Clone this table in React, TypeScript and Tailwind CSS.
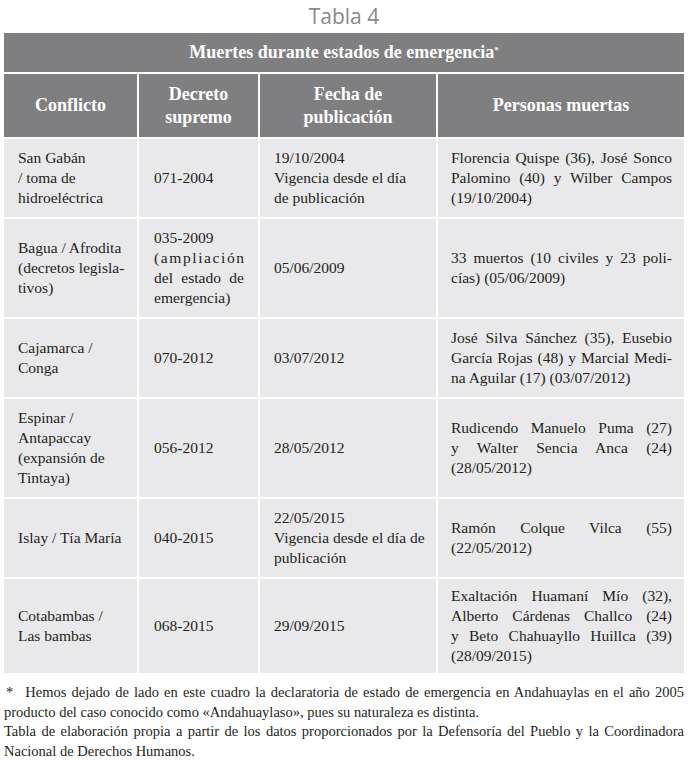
type Line = { t: string; j?: boolean; wide?: boolean };

const rows: { c: Line[][]; last?: boolean }[] = [
  {
    c: [
      [{ t: "San Gabán" }, { t: "/ toma de" }, { t: "hidroeléctrica" }],
      [{ t: "071-2004" }],
      [{ t: "19/10/2004" }, { t: "Vigencia desde el día" }, { t: "de publicación" }],
      [
        { t: "Florencia Quispe (36), José Sonco", j: true },
        { t: "Palomino (40) y Wilber Campos", j: true },
        { t: "(19/10/2004)" },
      ],
    ],
  },
  {
    c: [
      [{ t: "Bagua / Afrodita" }, { t: "(decretos legisla-" }, { t: "tivos)" }],
      [{ t: "035-2009" }, { t: "(ampliación", wide: true }, { t: "del estado de", j: true }, { t: "emergencia)" }],
      [{ t: "05/06/2009" }],
      [{ t: "33 muertos (10 civiles y 23 poli-", j: true }, { t: "cías) (05/06/2009)" }],
    ],
  },
  {
    c: [
      [{ t: "Cajamarca /" }, { t: "Conga" }],
      [{ t: "070-2012" }],
      [{ t: "03/07/2012" }],
      [
        { t: "José Silva Sánchez (35), Eusebio", j: true },
        { t: "García Rojas (48) y Marcial Medi-", j: true },
        { t: "na Aguilar (17) (03/07/2012)" },
      ],
    ],
  },
  {
    c: [
      [{ t: "Espinar /" }, { t: "Antapaccay" }, { t: "(expansión de" }, { t: "Tintaya)" }],
      [{ t: "056-2012" }],
      [{ t: "28/05/2012" }],
      [
        { t: "Rudicendo Manuelo Puma (27)", j: true },
        { t: "y Walter Sencia Anca (24)", j: true },
        { t: "(28/05/2012)" },
      ],
    ],
  },
  {
    c: [
      [{ t: "Islay / Tía María" }],
      [{ t: "040-2015" }],
      [{ t: "22/05/2015" }, { t: "Vigencia desde el día de" }, { t: "publicación" }],
      [{ t: "Ramón Colque Vilca (55)", j: true }, { t: "(22/05/2012)" }],
    ],
  },
  {
    last: true,
    c: [
      [{ t: "Cotabambas /" }, { t: "Las bambas" }],
      [{ t: "068-2015" }],
      [{ t: "29/09/2015" }],
      [
        { t: "Exaltación Huamaní Mío (32),", j: true },
        { t: "Alberto Cárdenas Challco (24)", j: true },
        { t: "y Beto Chahuayllo Huillca (39)", j: true },
        { t: "(28/09/2015)" },
      ],
    ],
  },
];

const pads = ["pl-[14px] pr-[2px]", "pl-[15px] pr-[14px]", "pl-[14px] pr-[4px]", "pl-[13px] pr-[12px]"];

function Text({ l }: { l: Line }) {
  if (l.j) return <span className="block whitespace-nowrap text-justify [text-align-last:justify]">{l.t}</span>;
  if (l.wide) return <span className="block whitespace-nowrap tracking-[1.6px]">{l.t}</span>;
  return <span className="block whitespace-nowrap">{l.t}</span>;
}

export default function App() {
  return (
    <div className="w-[688px] h-[760px] bg-white font-['Liberation_Serif',serif] text-[#231f20]">
      <div className="h-[33px] flex items-center justify-center font-['Open_Sans',sans-serif] text-[21px] text-[#8a8a8c] pt-[1px]">
        Tabla 4
      </div>
      <div className="mx-[4px] grid grid-cols-[133px_119px_176px_246px] gap-[2px]">
        <div className="col-span-4 h-[39px] bg-[#7f7f81] flex items-center justify-center text-white font-bold text-[18px]">
          Muertes durante estados de emergencia<sup className="text-[9px] relative -top-[3px]">*</sup>
        </div>
        {[["Conflicto"], ["Decreto", "supremo"], ["Fecha de", "publicación"], ["Personas muertas"]].map((h, i) => (
          <div key={i} className="h-[63px] bg-[#7f7f81] flex flex-col items-center justify-center text-white font-bold text-[18px] leading-[23px]">
            {h.map((s) => (
              <span key={s}>{s}</span>
            ))}
          </div>
        ))}
        {rows.map((r, ri) =>
          r.c.map((cell, ci) => (
            <div
              key={ri + "-" + ci}
              className={`bg-[#e9e9eb] flex flex-col justify-center text-[15.5px] leading-[20px] ${pads[ci]} ${r.last ? "py-[7px]" : "py-[9px]"}`}
            >
              {cell.map((l, li) => (
                <Text key={li} l={l} />
              ))}
            </div>
          ))
        )}
      </div>
      <div className="mx-[4px] mt-[10px] text-[14.5px] leading-[19.5px]">
        <span className="block whitespace-nowrap text-justify [text-align-last:justify]">
          <span className="pl-[2px] pr-[12px]">*</span>Hemos dejado de lado en este cuadro la declaratoria de estado de emergencia en Andahuaylas en el año 2005
        </span>
        <span className="block">producto del caso conocido como «Andahuaylaso», pues su naturaleza es distinta.</span>
        <span className="block whitespace-nowrap text-justify [text-align-last:justify]">
          Tabla de elaboración propia a partir de los datos proporcionados por la Defensoría del Pueblo y la Coordinadora
        </span>
        <span className="block">Nacional de Derechos Humanos.</span>
      </div>
    </div>
  );
}
